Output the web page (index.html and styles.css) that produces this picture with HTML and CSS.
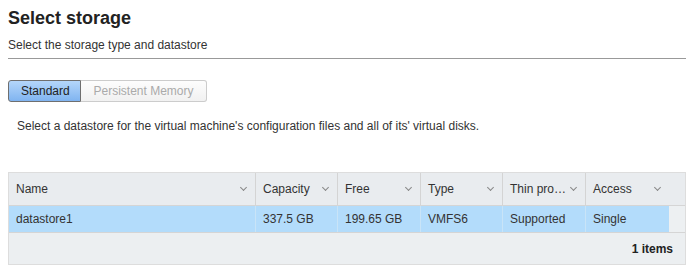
FILE: index.html
```html
<!DOCTYPE html>
<html lang="en">
<head>
    <meta charset="UTF-8">
    <title>Select storage</title>
    <link rel="stylesheet" href="styles.css">
</head>
<body>
    <div class="wizard-page">
        <div class="page-header">
            <h2>Select storage</h2>
            <p>Select the storage type and datastore</p>
        </div>

        <div class="toggle-group">
            <button class="toggle active">Standard</button>
            <button class="toggle">Persistent Memory</button>
        </div>

        <p class="hint">Select a datastore for the virtual machine's configuration files and all of its' virtual disks.</p>

        <div class="grid">
            <div class="grid-row grid-head">
                <div class="cell c-name">Name <span class="chev"></span></div>
                <div class="cell c-cap">Capacity <span class="chev"></span></div>
                <div class="cell c-free">Free <span class="chev"></span></div>
                <div class="cell c-type">Type <span class="chev"></span></div>
                <div class="cell c-thin">Thin pro… <span class="chev"></span></div>
                <div class="cell c-access">Access <span class="chev"></span></div>
                <div class="cell c-gutter"></div>
            </div>
            <div class="grid-row grid-body selected">
                <div class="cell c-name">datastore1</div>
                <div class="cell c-cap">337.5 GB</div>
                <div class="cell c-free">199.65 GB</div>
                <div class="cell c-type">VMFS6</div>
                <div class="cell c-thin">Supported</div>
                <div class="cell c-access">Single</div>
                <div class="cell c-gutter"></div>
            </div>
            <div class="grid-footer">1 items</div>
        </div>
    </div>
</body>
</html>
```

FILE: styles.css
```css
* {
    margin: 0;
    padding: 0;
    box-sizing: border-box;
}

body {
    font-family: Arial, "Liberation Sans", sans-serif;
    font-size: 12px;
    color: #333;
    background: #fff;
}

.wizard-page {
    padding: 6px 7px 0 8px;
}

.page-header {
    border-bottom: 1px solid #999;
    padding-bottom: 5px;
}

.page-header h2 {
    font-size: 18px;
    font-weight: bold;
    line-height: 24px;
    color: #222;
}

.page-header p {
    margin-top: 8px;
    line-height: 15px;
}

.toggle-group {
    display: flex;
    margin-top: 21px;
}

.toggle {
    font-family: inherit;
    font-size: 12px;
    height: 22px;
    border: 1px solid #ccc;
    background: linear-gradient(#fdfdfd, #f1f1f1);
    color: #aaa;
    padding: 0 12px;
    border-radius: 0 3px 3px 0;
    border-left: none;
    width: 126px;
}

.toggle.active {
    background: linear-gradient(#b4d6fa, #80b4f0);
    border: 1px solid #6f6f6f;
    color: #222;
    border-radius: 3px 0 0 3px;
    width: 73px;
}

.hint {
    margin-top: 17px;
    padding-left: 9px;
    line-height: 15px;
}

.grid {
    margin-top: 38px;
    width: 678px;
    border: 1px solid #ddd;
    background: #eceff1;
}

.grid-row {
    display: flex;
}

.grid-head {
    height: 33px;
    background: #e9ecef;
    border-bottom: 1px solid #d5d5d5;
}

.grid-head .cell {
    border-right: 1px solid #d4d4d4;
    display: flex;
    align-items: center;
    justify-content: space-between;
    padding: 0 9px 0 7px;
}

.grid-head .c-access,
.grid-head .c-gutter {
    border-right: none;
}

.grid-body {
    height: 26px;
}

.grid-body .cell {
    display: flex;
    align-items: center;
    padding: 0 7px;
    border-right: 1px solid #c9e4f7;
    background: #b3dcfb;
}

.grid-body .c-access {
    border-right: none;
}

.grid-body .c-gutter {
    background: #edf0f2;
    border-right: none;
}

.c-name { width: 247px; }
.c-cap { width: 82px; }
.c-free { width: 83px; }
.c-type { width: 82px; }
.c-thin { width: 83px; }
.c-access { width: 83px; }
.c-gutter { flex: 1; }

.chev {
    width: 5px;
    height: 5px;
    border-right: 1px solid #888;
    border-bottom: 1px solid #888;
    transform: rotate(45deg);
    margin-top: -3px;
}

.grid-footer {
    height: 32px;
    border-top: 1px solid #d5d5d5;
    display: flex;
    align-items: center;
    justify-content: flex-end;
    padding-right: 12px;
    font-weight: bold;
    color: #222;
}
```
